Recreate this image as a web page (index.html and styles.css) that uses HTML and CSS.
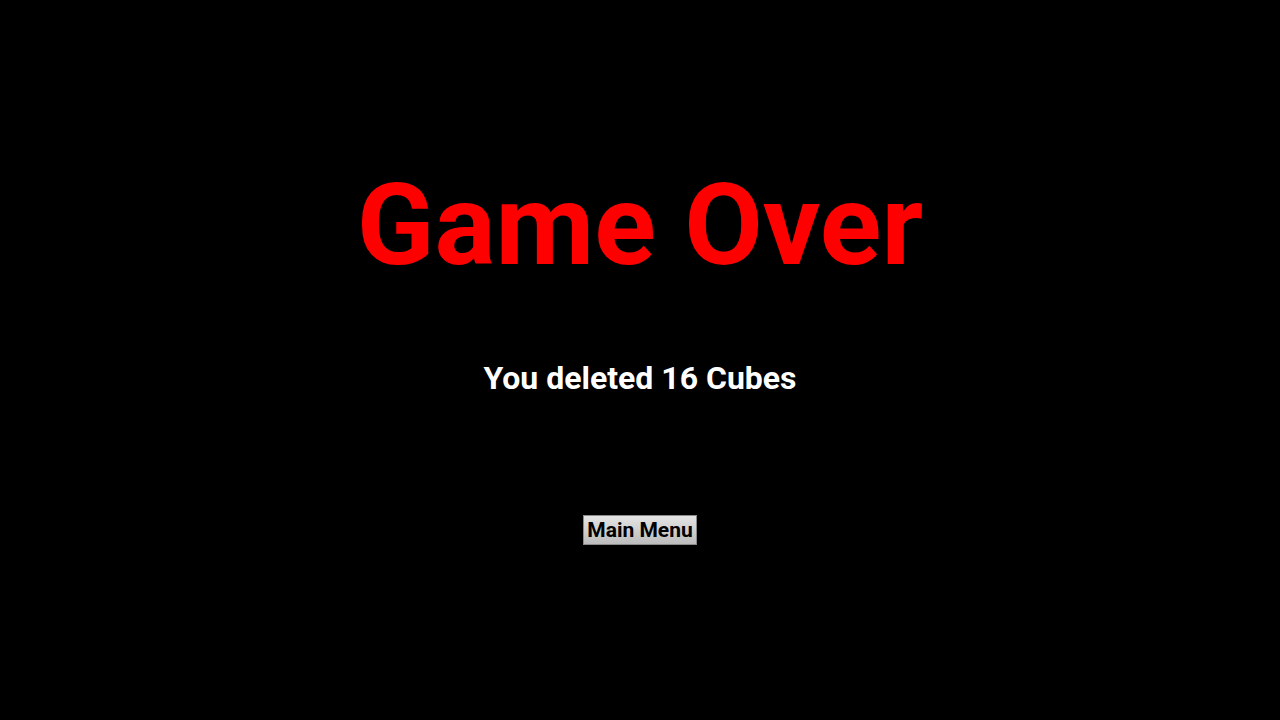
FILE: index.html
```html
<!DOCTYPE html>
<html>
<head>
<meta charset="utf-8">
<link rel="stylesheet" href="styles.css">
</head>
<body>
<main class="screen">
  <h1 class="title">Game Over</h1>
  <p class="score">You deleted 16 Cubes</p>
  <button class="menu-btn">Main Menu</button>
</main>
</body>
</html>
```
FILE: styles.css
```css
html, body {
  margin: 0;
  padding: 0;
  background: #000;
  width: 1280px;
  height: 720px;
  overflow: hidden;
}
.screen {
  display: flex;
  flex-direction: column;
  align-items: center;
  font-family: Roboto, "Liberation Sans", sans-serif;
  font-weight: 700;
  padding-top: 160px;
}
.title {
  margin: 0;
  color: #ff0000;
  font-size: 114px;
  line-height: 130px;
  font-weight: 700;
}
.score {
  margin: 68px 0 0 0;
  color: #fff;
  font-size: 32px;
  line-height: 40px;
}
.menu-btn {
  margin-top: 117px;
  font-family: Roboto, "Liberation Sans", sans-serif;
  font-weight: 700;
  font-size: 21px;
  line-height: 23px;
  color: #000;
  padding: 3px 3px 2px;
  border: 1px solid #8a8a8a;
  border-radius: 0;
  background: linear-gradient(#e4e4e4, #bcbcbc);
}
```
